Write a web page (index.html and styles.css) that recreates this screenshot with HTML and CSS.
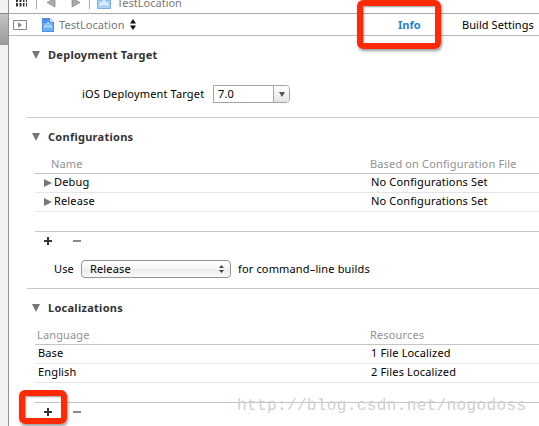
FILE: index.html
```html
<!DOCTYPE html>
<html lang="en">
<head>
<meta charset="utf-8">
<title>TestLocation</title>
<link rel="stylesheet" href="styles.css">
</head>
<body>
<div class="window">
  <aside class="gutter"><div class="scroller"></div></aside>
  <main class="editor">
    <nav class="jumpbar">
      <svg class="jump-icons" width="120" height="13" viewBox="0 0 120 13">
        <path d="M7 0h2v2H7zM10.500 0h2v2h-2zM14 0h1.500v2H14zM17 0h1v2h-1zM7 3h2v3.500H7zM10.500 3h2v3.500h-2zM14 3h1.500v3.500H14zM17 3h1v3.500h-1z" fill="#333"/>
        <path d="M27.500 0v9M80.500 0v9" stroke="#aaa"/>
        <path d="M46 -2v9l-8-4.500zM63 -2v9l8-4.500z" fill="#aaa" stroke="#777" stroke-width=".6"/>
        <path d="M88.500 0v8.500h13V0z" fill="#a9d0fb" stroke="#79aee8"/>
        <path d="M91 6l4-6 4 6M91 4h8" fill="none" stroke="#e8f5ff" stroke-width="1.300"/>
      </svg>
      <span class="crumb">TestLocation</span>
    </nav>
    <header class="tabs">
      <svg class="toggle" width="14" height="10" viewBox="0 0 14 10"><path d="M.5.5h13v9H.5z" fill="#fff" stroke="#858585"/><path d="M5 2.300v5.400L9 5z" fill="#888"/></svg>
      <svg class="doc" width="12" height="14" viewBox="0 0 12 14"><path d="M0 0h8l4 4v10H0z" fill="#4b91e8"/><path d="M1 5h10v8H1z" fill="#71aff5"/><path d="M8 0v4h4z" fill="#c9e1fa"/><path d="M2.500 10L6 4l3.500 6M2 8.500h8" fill="none" stroke="#c5e4ff"/></svg>
      <span class="project">TestLocation</span>
      <svg class="switch" width="6" height="11" viewBox="0 0 6 11"><path d="M0 4.500L3 0l3 4.500zM0 6.500h6L3 11z" fill="#111"/></svg>
      <span class="tab active">Info</span>
      <span class="tab">Build Settings</span>
    </header>
    <section class="section deployment">
      <h2><i class="down"></i><span class="h-deploy">Deployment Target</span></h2>
      <div class="target-row"><label>iOS Deployment Target</label><div class="combo"><span>7.0</span><b><i></i></b></div></div>
    </section>
    <section class="section configs">
      <h2><i class="down"></i><span class="h-config">Configurations</span></h2>
      <div class="table">
        <div class="row head"><span class="indent">Name</span><span class="based">Based on Configuration File</span></div>
        <div class="row"><span class="tree"><i></i>Debug</span><span class="set">No Configurations Set</span></div>
        <div class="row"><span class="tree"><i></i>Release</span><span class="set">No Configurations Set</span></div>
        <div class="blank"></div>
        <div class="actions"><svg width="40" height="9" viewBox="0 0 40 9"><path d="M0 4h8M4 0v8" stroke="#333" stroke-width="2"/><path d="M29 4h8" stroke="#888" stroke-width="2"/></svg></div>
      </div>
      <div class="use-row"><span class="use">Use</span><div class="select"><span>Release</span><svg width="5" height="8" viewBox="0 0 5 8"><path d="M0 3l2.500-3L5 3zM0 5h5L2.500 8z" fill="#444"/></svg></div><span class="builds">for command–line builds</span></div>
    </section>
    <section class="section locales">
      <h2><i class="down"></i><span class="h-local">Localizations</span></h2>
      <div class="table">
        <div class="row head"><span class="lang">Language</span><span class="res">Resources</span></div>
        <div class="row"><span class="base">Base</span><span class="one">1 File Localized</span></div>
        <div class="row"><span class="base">English</span><span class="one">2 Files Localized</span></div>
        <div class="blank"></div>
        <div class="actions"><svg width="40" height="9" viewBox="0 0 40 9"><path d="M0 4h8M4 0v8" stroke="#333" stroke-width="2"/><path d="M29 4h8" stroke="#888" stroke-width="2"/></svg></div>
      </div>
    </section>
  </main>
  <div class="mark mark-info"></div>
  <div class="mark mark-add"></div>
  <div class="watermark">http://blog.csdn.net/nogodoss</div>
</div>
</body>
</html>
```
FILE: styles.css
```css
* { box-sizing: border-box; }
body {
  margin: 0;
  font: 11px/14px "Noto Sans", "Open Sans", sans-serif;
  letter-spacing: .15px;
  color: #000;
  background: #fff;
}
.window {
  position: relative;
  display: flex;
  width: 539px;
  height: 426px;
  overflow: hidden;
}
.gutter {
  flex: 0 0 9px;
  padding-top: 13px;
  background: #f2f2f2;
  border-right: 1px solid #929292;
}
.scroller {
  height: 32px;
  border-top: 1px solid #888;
  background: linear-gradient(#c4c4c4, #999);
}
.editor { flex: 1; min-width: 0; }
span, label { white-space: nowrap; }
.jumpbar {
  display: flex;
  height: 14px;
  border-bottom: 1px solid #a9a9a9;
}
.jump-icons { flex: none; margin-right: -12px; }
.crumb { margin-top: -4px; color: #777; letter-spacing: 0; }
.tabs {
  display: flex;
  align-items: center;
  height: 22px;
  padding-left: 4px;
  border-bottom: 1px solid #bcbcbc;
  letter-spacing: 0;
}
.toggle { margin-right: 15px; }
.doc { margin-right: 5px; }
.project { width: 67px; color: #777; letter-spacing: .05px; }
.switch { margin-left: 4px; }
.tab { margin-left: 41px; letter-spacing: .05px; }
.active { width: 23px; margin-left: 262px; color: #2482dc; font-weight: 700; }
.section { border-bottom: 1px solid #c9c9c9; margin-left: 18px; }
h2 {
  display: flex;
  align-items: center;
  height: 14px;
  margin: 0;
  padding-left: 5px;
  color: #333;
  font-size: 11px;
  line-height: 14px;
  letter-spacing: .27px;
}
.down {
  margin-right: 7px;
  border: solid transparent;
  border-width: 8px 4.5px 0;
  border-top-color: #777;
}
h2 span { margin-left: 1px; }
.deployment { height: 82px; padding-top: 12px; }
.target-row { display: flex; align-items: center; margin-top: 23px; padding-left: 55px; height: 18px; }
.target-row label { width: 131px; }
.combo {
  display: flex;
  width: 77px;
  height: 18px;
  border: 1px solid #a5a5a5;
  border-radius: 0 4px 4px 0;
  line-height: 16px;
}
.combo span { flex: 1; padding-left: 4px; }
.combo b {
  display: flex;
  align-items: center;
  justify-content: center;
  width: 16px;
  border-left: 1px solid #a5a5a5;
  border-radius: 0 3px 3px 0;
  background: linear-gradient(#fff, #e4e4e4);
}
.combo i { border: solid transparent; border-width: 5px 3.5px 0; border-top-color: #555; }
.configs { height: 171px; padding-top: 12px; }
.table { margin-left: 8px; }
.row {
  display: grid;
  grid-template-columns: 336px 1fr;
  align-items: center;
  height: 19px;
  padding-bottom: 3px;
  border-bottom: 1px solid #e5e5e5;
}
.configs .table { margin-top: 12px; }
.row.head { color: #929292; border-bottom-color: #c5c5c5; height: 18px; padding-bottom: 2px; }
.indent { padding-left: 16px; }
.based { margin-left: -1px; }
.tree { display: flex; align-items: center; padding-left: 9px; }
.tree i { margin: 3px 2px 0 0; border: solid transparent; border-width: 4.5px 0 4.5px 8px; border-left-color: #777; }
.blank { height: 20px; border-bottom: 1px solid #c5c5c5; }
.actions { padding: 5px 0 0 9px; height: 18px; }
.actions svg { display: block; }
.use-row { display: flex; align-items: center; margin-top: 10px; height: 18px; padding-left: 27px; }
.use { width: 27px; }
.select {
  display: flex;
  align-items: center;
  justify-content: space-between;
  width: 150px;
  height: 18px;
  padding: 0 6px 0 8px;
  border: 1px solid #929292;
  border-radius: 4px;
  background: linear-gradient(#fff, #f5f5f5 50%, #ebebeb 51%, #fafafa);
}
.builds { margin-left: 7px; }
.locales { border: 0; padding-top: 12px; }
.locales .table { margin-top: 12px; }
.lang { padding-left: 2px; }
.base { padding-left: 3px; }
.res { margin-left: -1px; }
.mark {
  position: absolute;
  border: 6px solid #ff2a05;
  border-radius: 6px;
  box-shadow: 1px 2px 3px rgba(0,0,0,.4), inset 1px 1px 2px rgba(0,0,0,.4);
}
.mark-info { left: 357px; top: 0; width: 84px; height: 49px; }
.mark-add { left: 19px; top: 390px; width: 48px; height: 34px; }
.watermark {
  position: absolute;
  left: 237px;
  top: 396px;
  color: #d0d0ce;
  font: 16px/20px "Liberation Mono", monospace;
  letter-spacing: .38px;
  white-space: nowrap;
}
```
